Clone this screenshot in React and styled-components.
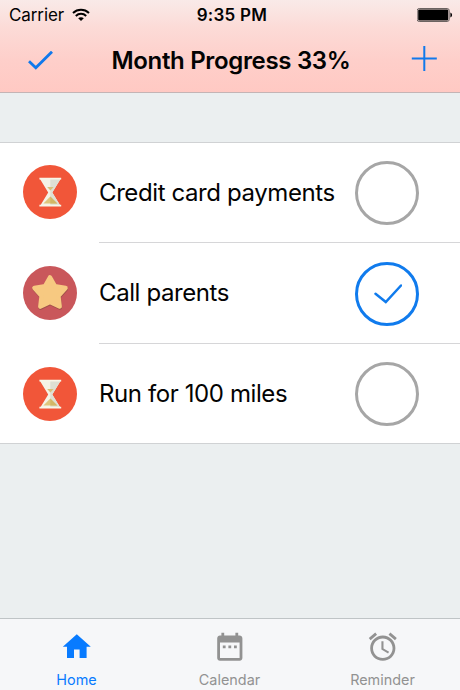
import React, { useState } from "react";
import styled, { createGlobalStyle } from "styled-components";

const GlobalStyle = createGlobalStyle`
  * {
    box-sizing: border-box;
  }
  body {
    margin: 0;
    font-family: Inter, "Liberation Sans", sans-serif;
  }
`;

const Screen = styled.div`
  width: 460px;
  height: 690px;
  display: flex;
  flex-direction: column;
  background: #ebeff0;
  color: #030303;
  overflow: hidden;
`;

const Header = styled.header`
  height: 93px;
  border-bottom: 1px solid #c4b4b5;
  background: linear-gradient(#f9eae8 0%, #fcdbd7 30%, #fecfca 65%, #ffc9c3 100%);
`;

const StatusBar = styled.div`
  height: 30px;
  padding: 0 7px 0 9px;
  display: grid;
  grid-template-columns: 1fr auto 1fr;
  align-items: center;
  font-size: 17px;
`;

const Carrier = styled.div`
  display: flex;
  align-items: center;
  gap: 8px;
  letter-spacing: -0.1px;
`;

const Time = styled.div`
  padding-left: 2px;
  font-weight: 600;
  letter-spacing: 0.25px;
`;

const Battery = styled.svg`
  justify-self: end;
`;

const NavBar = styled.div`
  height: 62px;
  padding: 0 23px 0 27px;
  display: flex;
  align-items: center;
  justify-content: space-between;
`;

const Title = styled.h1`
  margin: 0 3px 0 0;
  font-size: 24px;
  font-weight: 600;
  line-height: 30px;
  letter-spacing: -0.33px;
  white-space: nowrap;
`;

const IconButton = styled.button`
  display: flex;
  margin: 0 0 ${(props) => props.$lift || 0}px;
  padding: 0;
  border: 0;
  background: none;
  color: #1079ec;
`;

const List = styled.ul`
  margin: 49px 0 0;
  padding: 0;
  list-style: none;
  background: #fff;
  border-top: 1px solid #d0d2d4;
  border-bottom: 1px solid #d0d2d4;
`;

const RowBody = styled.div`
  flex: 1;
  height: 100%;
  padding-right: 41px;
  display: flex;
  align-items: center;
  justify-content: space-between;
  border-bottom: 1px solid #d6d6d8;
`;

const Row = styled.li`
  height: 100px;
  padding-left: 23px;
  display: flex;
  align-items: center;
  gap: 22px;

  > svg {
    margin-bottom: 2px;
  }

  &:nth-child(2) {
    height: 101px;
  }

  &:nth-child(2) > svg {
    margin-bottom: 1px;
  }

  &:last-child {
    height: 99px;
  }

  &:last-child > svg {
    margin-bottom: 0;
  }

  &:last-child ${RowBody} {
    border-bottom: 0;
  }
`;

const RowLabel = styled.span`
  font-size: 24px;
  line-height: 30px;
  letter-spacing: -0.4px;
  white-space: nowrap;
`;

const Toggle = styled.button`
  width: 64px;
  height: 64px;
  margin: 1px 0 0;
  padding: 0;
  display: flex;
  align-items: center;
  justify-content: center;
  border: 3px solid ${(props) => (props.$done ? "#107bed" : "#a6a6a6")};
  border-radius: 50%;
  background: none;
  color: #107bed;
`;

const TabBar = styled.nav`
  height: 72px;
  margin-top: auto;
  padding-right: 1px;
  display: grid;
  grid-template-columns: repeat(3, 1fr);
  border-top: 1px solid #bfc4c6;
  background: #f6f7f9;
`;

const Tab = styled.button`
  padding: 11px 0 0;
  display: flex;
  flex-direction: column;
  align-items: center;
  border: 0;
  background: none;
  font: inherit;
  color: ${(props) => (props.$active ? "#087bff" : "#929292")};
`;

const TabLabel = styled.span`
  margin-top: 7px;
  font-size: 14.4px;
  line-height: 18px;
`;

const WifiIcon = () => (
  <svg width="18" height="14" viewBox="0 0 18 14">
    <path d="M1 4.9C5.6 .6 12.4 .6 17 4.9" fill="none" stroke="#000" strokeWidth="2" />
    <path d="M3.8 7.9C6.8 5.1 11.2 5.1 14.2 7.9" fill="none" stroke="#000" strokeWidth="2" />
    <path d="M6.2 10.2C7.8 8.8 10.2 8.8 11.8 10.2L9 13z" />
  </svg>
);

const BatteryIcon = () => (
  <Battery width="36" height="14" viewBox="0 0 36 14">
    <rect x="0.2" y="0.5" width="32" height="13" rx="2" fill="#fbe4e1" stroke="#6b6361" />
    <rect x="1.2" y="1.5" width="30" height="11" rx="1" />
    <path d="M33.4 4.5c2.2 1 2.2 4 0 5z" />
  </Battery>
);

const DoneIcon = () => (
  <svg width="27" height="20" viewBox="0 0 27 20">
    <path d="M2 10.2L8.8 16.7L25 0.7" fill="none" stroke="currentColor" strokeWidth="2.8" />
  </svg>
);

const PlusIcon = () => (
  <svg width="26" height="26" viewBox="0 0 26 26">
    <path d="M13.3 0v25M.8 12.5h25" fill="none" stroke="currentColor" strokeWidth="2" />
  </svg>
);

const CheckIcon = () => (
  <svg width="30" height="22" viewBox="0 0 30 22">
    <path
      d="M3.5 10.7L13.8 19L29 2.5"
      fill="none"
      stroke="currentColor"
      strokeWidth="2.5"
      strokeLinecap="round"
    />
  </svg>
);

const HourglassIcon = () => (
  <svg width="54" height="54" viewBox="0 0 54 54">
    <circle cx="27" cy="27" r="27" fill="#f15639" />
    <path d="M17 14H37.5L29.3 27.5L37.5 41H17L25.2 27.5z" fill="#f5f2e6" />
    <path d="M27.3 14H37.5L29.3 27.5L37.5 41H27.3z" fill="#dedfd3" />
    <path d="M24.2 22h6.4L27.4 25.5z" fill="#d8c07a" />
    <path d="M27.3 31.5l7 7H20.4z" fill="#dfc67c" />
    <path d="M27.3 31.5l7 7h-7z" fill="#d2b766" />
    <path d="M16.4 12.8h21.8v1.7H16.4zM16.4 39.7h21.8v1.7H16.4z" fill="#f8f5e8" />
  </svg>
);

const STAR =
  "M27 11.5L31.8 20.2L42.5 22L35.3 30L36.6 40.5L27 36L17.4 40.5L18.7 30L11.5 22L22.2 20.2z";

const StarIcon = () => (
  <svg width="54" height="54" viewBox="0 0 54 54">
    <circle cx="27" cy="27" r="27" fill="#c9575b" />
    <path
      d={STAR}
      transform="translate(0.3 1)"
      fill="#a0504b"
      stroke="#a0504b"
      strokeWidth="4.6"
      strokeLinejoin="round"
    />
    <path d={STAR} fill="#f7c981" stroke="#f7c981" strokeWidth="4.6" strokeLinejoin="round" />
  </svg>
);

const TabIcon = ({ path }) => (
  <svg width="33.6" height="33.6" viewBox="0 0 24 24" fill="currentColor">
    <path d={path} />
  </svg>
);

const tabs = [
  { name: "Home", path: "M10 20v-6h4v6h5v-8h3L12 3 2 12h3v8z" },
  {
    name: "Calendar",
    path: "M9 11H7v2h2v-2zm4 0h-2v2h2v-2zm4 0h-2v2h2v-2zm2-7h-1V2h-2v2H8V2H6v2H5c-1.11 0-1.99.9-1.99 2L3 20c0 1.1.89 2 2 2h14c1.1 0 2-.9 2-2V6c0-1.1-.9-2-2-2zm0 16H5V9h14v11z",
  },
  {
    name: "Reminder",
    path: "M22 5.72l-4.6-3.86-1.29 1.53 4.6 3.86L22 5.72zM7.88 3.39L6.6 1.86 2 5.71l1.29 1.53 4.59-3.85zM12.5 8H11v6l4.75 2.85.75-1.23-4-2.37V8zM12 4c-4.97 0-9 4.03-9 9s4.02 9 9 9c4.97 0 9-4.03 9-9s-4.03-9-9-9zm0 16c-3.87 0-7-3.13-7-7s3.13-7 7-7 7 3.13 7 7-3.13 7-7 7z",
  },
];

const initialTasks = [
  { id: 1, label: "Credit card payments", Icon: HourglassIcon, done: false },
  { id: 2, label: "Call parents", Icon: StarIcon, done: true },
  { id: 3, label: "Run for 100 miles", Icon: HourglassIcon, done: false },
];

export default function App() {
  const [tasks, setTasks] = useState(initialTasks);
  const [activeTab, setActiveTab] = useState("Home");

  const toggleTask = (id) => {
    setTasks(tasks.map((t) => (t.id === id ? { ...t, done: !t.done } : t)));
  };

  return (
    <Screen>
      <GlobalStyle />
      <Header>
        <StatusBar>
          <Carrier>
            Carrier
            <WifiIcon />
          </Carrier>
          <Time>9:35 PM</Time>
          <BatteryIcon />
        </StatusBar>
        <NavBar>
          <IconButton $lift={1}>
            <DoneIcon />
          </IconButton>
          <Title>Month Progress 33%</Title>
          <IconButton $lift={4}>
            <PlusIcon />
          </IconButton>
        </NavBar>
      </Header>
      <List>
        {tasks.map(({ id, label, Icon, done }) => (
          <Row key={id}>
            <Icon />
            <RowBody>
              <RowLabel>{label}</RowLabel>
              <Toggle $done={done} onClick={() => toggleTask(id)}>
                {done && <CheckIcon />}
              </Toggle>
            </RowBody>
          </Row>
        ))}
      </List>
      <TabBar>
        {tabs.map(({ name, path }) => (
          <Tab key={name} $active={name === activeTab} onClick={() => setActiveTab(name)}>
            <TabIcon path={path} />
            <TabLabel>{name}</TabLabel>
          </Tab>
        ))}
      </TabBar>
    </Screen>
  );
}
